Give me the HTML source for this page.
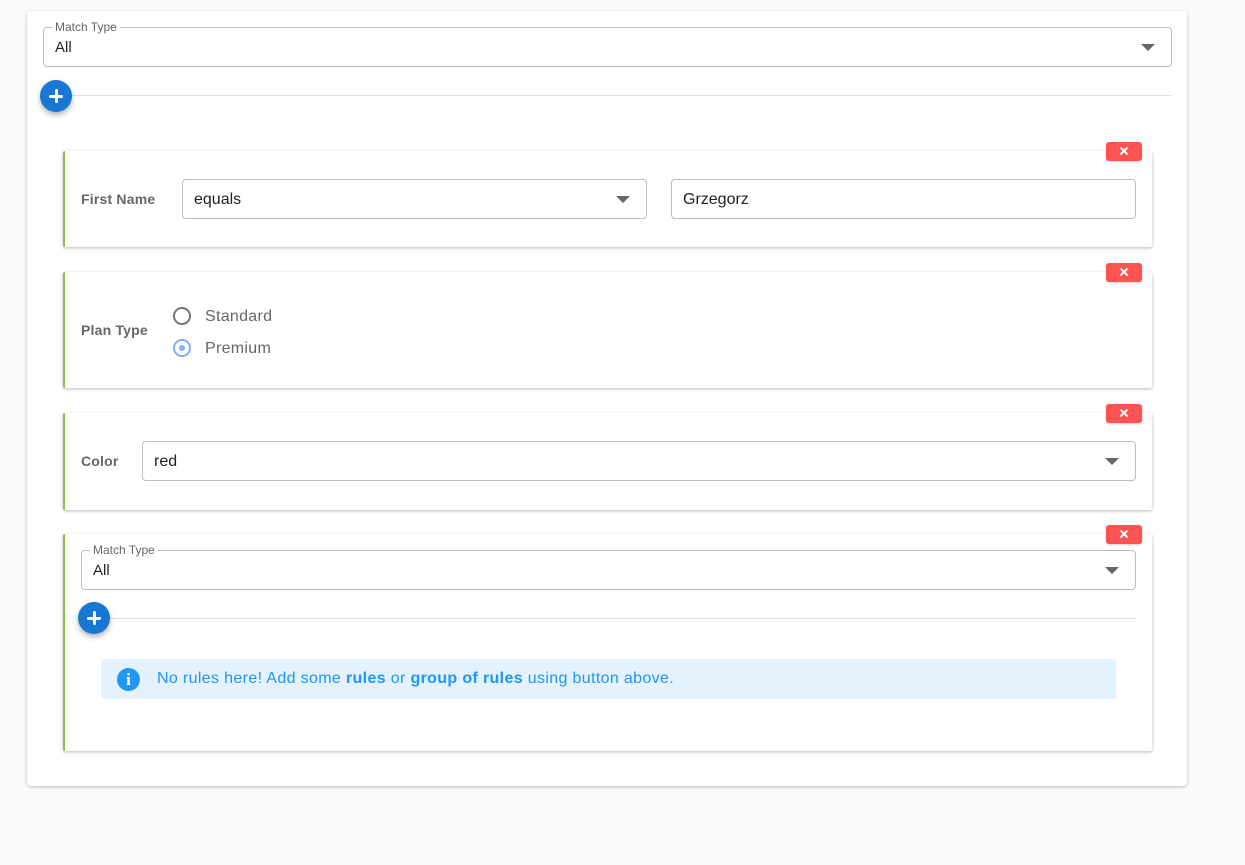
<!DOCTYPE html>
<html><head><meta charset="utf-8"><style>
*{box-sizing:border-box;margin:0;padding:0}
body{width:1245px;height:865px;background:#fafafa;font-family:"Liberation Sans",sans-serif;position:relative;overflow:hidden;color:#222}
.abs{position:absolute}
.card{position:absolute;left:27px;top:11px;width:1160px;height:775px;background:#fff;border-radius:4px;box-shadow:0 1px 3px rgba(0,0,0,.25)}
.field{position:absolute;border:1px solid #bdbdbd;border-radius:4px;background:#fff;font-size:15px;color:#222}
.field .lbl{position:absolute;top:-8px;left:8px;background:#fff;padding:0 3px;font-size:12px;color:#666;line-height:14px}
.field .val{position:absolute;left:11px;top:10px}
.field .val2{position:absolute;left:11px;top:11px;font-size:16px}
.arrow{position:absolute;right:16px;top:16px;width:0;height:0;border-left:7px solid transparent;border-right:7px solid transparent;border-top:7px solid #666}
.plus{position:absolute;width:32px;height:32px;border-radius:50%;background:#1976d2;box-shadow:0 3px 6px rgba(0,0,0,.3)}
.plus:before{content:"";position:absolute;left:9px;top:14.5px;width:14px;height:3px;background:#fff;border-radius:2px}
.plus:after{content:"";position:absolute;left:14.5px;top:9px;width:3px;height:14px;background:#fff;border-radius:2px}
.hr{position:absolute;height:1px;background:#e0e0e0}
.rule{position:absolute;left:63px;width:1089px;background:#fff;border-left:2px solid #8bc34a;border-radius:2px;box-shadow:0 1px 3px rgba(0,0,0,.28)}
.del{position:absolute;left:1106px;width:36px;height:19px;background:#ff5252;border-radius:3px;box-shadow:0 1px 2px rgba(0,0,0,.2)}
.del:before,.del:after{content:"";position:absolute;left:13px;top:8px;width:10px;height:2.4px;background:#fff;transform:rotate(45deg)}
.del:after{transform:rotate(-45deg)}
.rl{position:absolute;font-size:14px;font-weight:bold;color:#666;letter-spacing:.2px}
.radio{position:absolute;width:18px;height:18px;border-radius:50%;border:2px solid #757575}
.rt{position:absolute;font-size:16px;color:#666;letter-spacing:.3px}
</style></head><body>
<div class="card"></div>
<div class="field" style="left:43px;top:27px;width:1129px;height:40px"><span class="lbl">Match Type</span><span class="val" style="top:11px">All</span><span class="arrow"></span></div>
<div class="hr" style="left:72px;top:95px;width:1100px"></div>
<div class="plus" style="left:40px;top:80px"></div>

<div class="rule" style="top:151px;height:96px"></div>
<div class="del" style="top:142px"></div>
<div class="rl" style="left:81px;top:191px">First Name</div>
<div class="field" style="left:182px;top:179px;width:465px;height:40px"><span class="val2">equals</span><span class="arrow"></span></div>
<div class="field" style="left:671px;top:179px;width:465px;height:40px"><span class="val2">Grzegorz</span></div>

<div class="rule" style="top:272px;height:116px"></div>
<div class="del" style="top:263px"></div>
<div class="rl" style="left:81px;top:322px">Plan Type</div>
<div class="radio" style="left:173px;top:307px"></div>
<div class="rt" style="left:205px;top:308px">Standard</div>
<div class="radio" style="left:173px;top:339px;border-color:#82b1ff"><div style="position:absolute;left:4px;top:4px;width:6px;height:6px;border-radius:50%;background:#82b1ff"></div></div>
<div class="rt" style="left:205px;top:340px">Premium</div>

<div class="rule" style="top:413px;height:97px"></div>
<div class="del" style="top:404px"></div>
<div class="rl" style="left:81px;top:453px">Color</div>
<div class="field" style="left:142px;top:441px;width:994px;height:40px"><span class="val2">red</span><span class="arrow"></span></div>

<div class="rule" style="top:534px;height:217px"></div>
<div class="del" style="top:525px"></div>
<div class="field" style="left:81px;top:550px;width:1055px;height:40px"><span class="lbl">Match Type</span><span class="val" style="top:11px">All</span><span class="arrow"></span></div>
<div class="hr" style="left:110px;top:618px;width:1026px"></div>
<div class="plus" style="left:78px;top:602px"></div>
<div class="abs" style="left:101px;top:659px;width:1015px;height:40px;background:#e3f2fd;border-radius:3px"></div>
<div class="abs" style="left:117px;top:668px;width:23px;height:23px;border-radius:50%;background:#2196f3;color:#fff;font-family:'Liberation Serif',serif;font-weight:bold;font-size:17px;text-align:center;line-height:24px">i</div>
<div class="abs" style="left:157px;top:670px;font-size:16px;color:#2196f3;letter-spacing:.35px">No rules here! Add some <b>rules</b> or <b>group of rules</b> using button above.</div>
</body></html>
